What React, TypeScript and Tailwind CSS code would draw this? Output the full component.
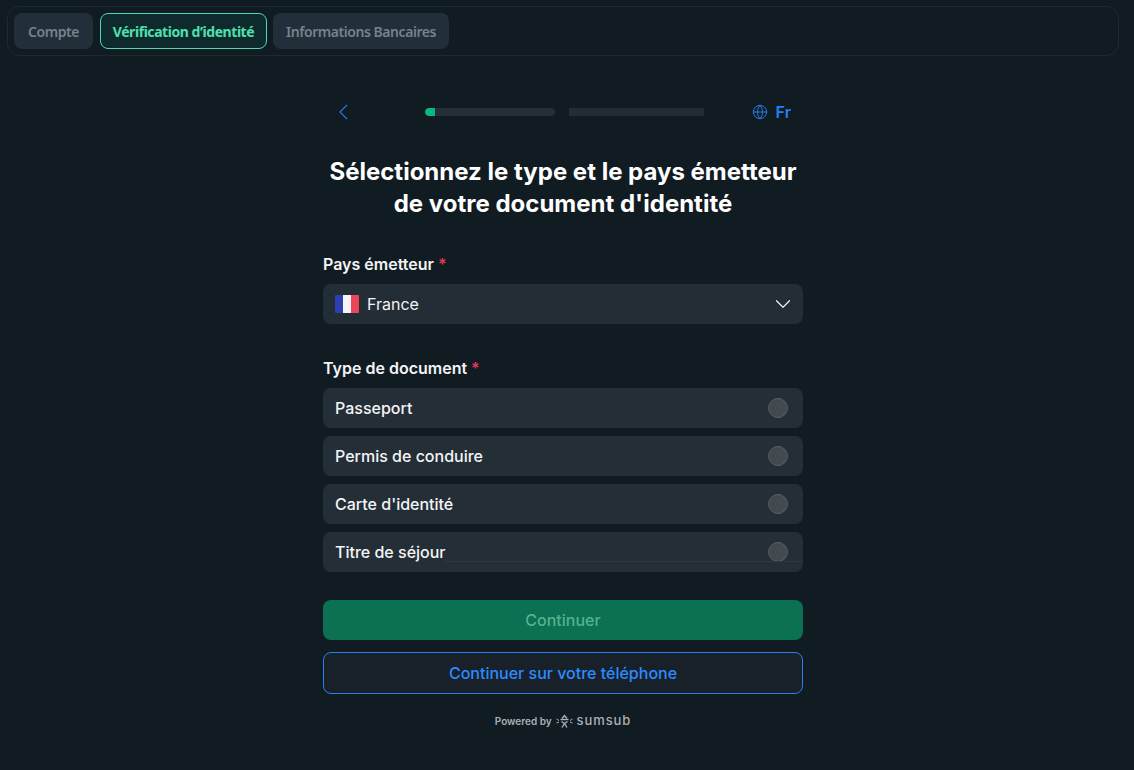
import { ChevronDown, Globe } from "lucide-react";

const documentTypes = ["Passeport", "Permis de conduire", "Carte d'identité", "Titre de séjour"];

function FranceFlag() {
  return (
    <div className="flex h-[18px] w-6 overflow-hidden rounded-[1px]">
      <div className="w-2 bg-[#2b3fb0]" />
      <div className="w-2 bg-[#f4f5f7]" />
      <div className="w-2 bg-[#ee4659]" />
    </div>
  );
}

function BackChevron() {
  return (
    <svg width="10" height="16" viewBox="0 0 10 16" fill="none" stroke="#2177e8" strokeWidth="1.2">
      <path d="M9 1 L2 8 L9 15" />
    </svg>
  );
}

function SumsubMark() {
  return (
    <svg width="17" height="14" viewBox="0 0 17 14" fill="none" stroke="#a9b1b7" strokeWidth="1.4">
      <path d="M6 4.5 L8.5 1.5 L11 4.5" />
      <path d="M4.5 5.5 H12.5" />
      <path d="M5.5 7.5 L8.5 9.5 L11.5 7.5" />
      <path d="M8.5 9.5 L6 13.5 M8.5 9.5 L11 13.5" />
      <path d="M0.5 5 L3 6.5 M0.5 9 L3 8 M16.5 5 L14 6.5 M16.5 9 L14 8" strokeWidth="1" />
    </svg>
  );
}

export default function App() {
  return (
    <div className="h-[770px] w-[1134px] overflow-hidden bg-[#111b22] pt-1.5 font-['Inter',sans-serif]">
      <div className="mx-[7px] flex h-[50px] w-[1112px] items-center gap-[6px] rounded-xl border border-[#1d2a30] px-[6px] font-['Noto_Sans',sans-serif] text-[14px] font-semibold tracking-[-0.45px]">
        <div className="mr-px flex h-9 w-[79px] items-center justify-center rounded-lg bg-[#222e39] text-[#76828c]">
          Compte
        </div>
        <div className="flex h-9 w-[167px] items-center justify-center rounded-lg border border-[#4fd8ac] bg-[#0f2a2c] font-bold text-[#4fe0b0]">
          Vérification d’identité
        </div>
        <div className="flex h-9 w-[176px] items-center justify-center rounded-lg bg-[#222e39] text-[#76828c]">
          Informations Bancaires
        </div>
      </div>

      <div className="mt-[44px] ml-[323px] flex w-[480px] flex-col">
        <div className="flex h-6 items-center pr-[12px] pl-[15px]">
          <BackChevron />
          <div className="ml-[77px] flex items-center gap-[14px]">
            <div className="h-2 w-[130px] overflow-hidden rounded-full bg-[#232e36]">
              <div className="h-2 w-[10px] rounded-l-full bg-[#06b97f]" />
            </div>
            <div className="h-2 w-[135px] bg-[#212c33]" />
          </div>
          <div className="ml-auto flex items-center gap-[8px] text-[16px] font-semibold text-[#2680f0]">
            <Globe className="size-4" strokeWidth={1.5} />
            Fr
          </div>
        </div>

        <h1 className="mt-[32px] text-center text-[24px] leading-[32px] font-bold text-white">
          Sélectionnez le type et le pays émetteur
          <br />
          de votre document d'identité
        </h1>

        <div className="mt-[32px] h-6 text-[16px] leading-6 font-semibold text-[#f2f4f5]">
          Pays émetteur <span className="text-[#e0385c]">*</span>
        </div>
        <div className="mt-2 flex h-10 items-center rounded-lg bg-[#232d35] pr-[7px] pl-3 text-[16px] text-[#f2f4f5]">
          <FranceFlag />
          <span className="ml-2">France</span>
          <ChevronDown className="ml-auto size-[26px] text-[#eef0f2]" strokeWidth={1.1} />
        </div>

        <div className="mt-8 h-6 text-[16px] leading-6 font-semibold text-[#f2f4f5]">
          Type de document <span className="text-[#e0385c]">*</span>
        </div>
        <div className="mt-2 flex flex-col gap-2">
          {documentTypes.map((label, index) => (
            <div
              key={label}
              className="relative flex h-10 items-center justify-between rounded-lg bg-[#242e36] pr-[15px] pl-3 text-[16px] font-medium text-[#f4f5f6]"
            >
              {label}
              <div className="size-5 rounded-full border border-[#565d64] bg-[#42494f]" />
              {index === documentTypes.length - 1 && (
                <div className="absolute right-0 bottom-[10px] left-[122px] h-px bg-[#2e3840]" />
              )}
            </div>
          ))}
        </div>

        <button className="mt-7 h-10 rounded-lg bg-[#0c7052] text-[16px] font-medium text-[#55b290]">
          Continuer
        </button>
        <button className="mt-3 h-[42px] rounded-lg border border-[#2680f0] bg-[#182129] text-[16px] font-medium text-[#2d8bff]">
          Continuer sur votre téléphone
        </button>

        <div className="mt-[19px] flex h-[16px] items-center justify-center gap-[4px] text-[10px] font-semibold text-[#a9b1b7]">
          Powered by
          <SumsubMark />
          <span className="text-[13px] font-medium tracking-[0.9px]">sumsub</span>
        </div>
      </div>
    </div>
  );
}
